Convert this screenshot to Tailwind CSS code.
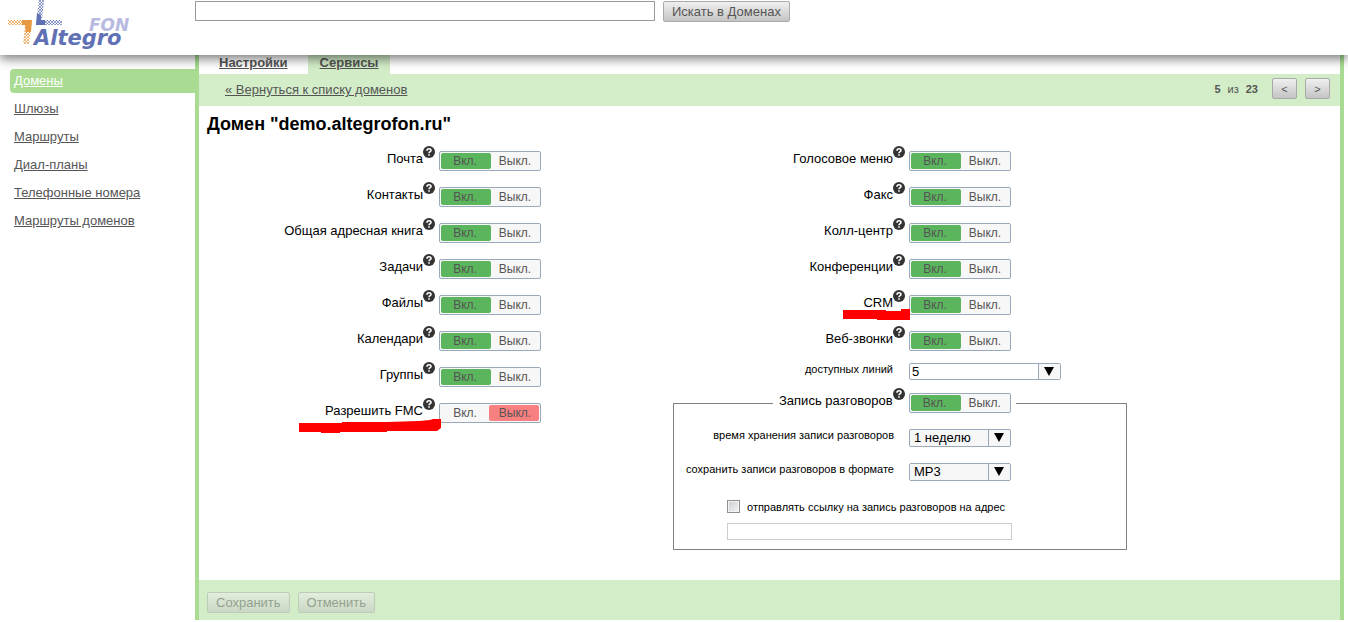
<!DOCTYPE html>
<html lang="ru">
<head>
    <meta charset="utf-8" />
    <meta name="viewport" content="width=device-width, initial-scale=1" />
    <title>Altegro FON</title>
    <script src="https://cdn.jsdelivr.net/npm/@tailwindcss/browser@4"></script>
</head>
<body class="bg-white font-['Liberation_Sans',Arial,sans-serif] text-[13px] leading-4 text-black">

    <!-- Шапка -->
    <header class="relative z-10 flex items-start h-[55px] bg-white shadow-[0_4px_10px_rgba(0,0,0,0.5)]">
        <a href="#" class="block w-[195px] shrink-0" aria-label="Altegro FON">
            <svg class="block w-[195px] h-[52px] font-['DejaVu_Sans',Verdana,sans-serif] font-bold italic" viewBox="0 0 195 52">
                <defs>
                    <pattern id="dotsBlue" width="3" height="3" patternUnits="userSpaceOnUse">
                        <circle cx="1" cy="1" r="0.900" fill="#6070b4" />
                        <circle cx="2.500" cy="2.500" r="0.700" fill="#6070b4" />
                    </pattern>
                    <pattern id="dotsOrange" width="3" height="3" patternUnits="userSpaceOnUse">
                        <circle cx="1" cy="1" r="0.900" fill="#e89a45" />
                        <circle cx="2.500" cy="2.500" r="0.700" fill="#e89a45" />
                    </pattern>
                </defs>
                <path d="M8 20h24l-3 24h-6l2-19h-17z" fill="url(#dotsOrange)" />
                <path d="M22 20h10l-1 12h-5l-1-7h-3z" fill="#e89a45" />
                <path d="M39 0h5l-2 20h20v5h-26z" fill="url(#dotsBlue)" />
                <path d="M37 13l4 2v5h4v5h-9z" fill="#6070b4" />
                <text x="89" y="31" font-size="17" fill="#b8bae0">FON</text>
                <text x="34" y="45" font-size="21" fill="#6070b4">Altegro</text>
            </svg>
        </a>
        <form class="flex items-start gap-2 pt-px">
            <input type="text" aria-label="Поиск" class="w-[460px] h-5 px-1 border border-[#999] bg-white" />
            <button type="button" class="h-[21px] px-2 border border-[#aaa] rounded-xs bg-linear-to-b from-[#f0f0f0] to-[#c4c4c4] text-[#555]">Искать в Доменах</button>
        </form>
    </header>

    <div class="flex pr-1">
        <!-- Меню -->
        <nav class="w-[195px] shrink-0 pl-[10px] pt-[14px]">
            <ul class="flex flex-col gap-1 text-[#555] leading-6">
                <li class="pl-1 rounded-l bg-[#a9dc92] text-white"><a href="#" class="underline">Домены</a></li>
                <li class="pl-1"><a href="#" class="underline">Шлюзы</a></li>
                <li class="pl-1"><a href="#" class="underline">Маршруты</a></li>
                <li class="pl-1"><a href="#" class="underline">Диал-планы</a></li>
                <li class="pl-1"><a href="#" class="underline">Телефонные номера</a></li>
                <li class="pl-1"><a href="#" class="underline">Маршруты доменов</a></li>
            </ul>
        </nav>

        <main class="flex-1 border-x-4 border-[#a9dc92]">
            <div class="flex gap-2 pl-2 font-bold text-[#555]">
                <a href="#" class="h-[19px] px-3 underline">Настройки</a>
                <a href="#" class="h-[19px] px-3 underline bg-[#d3edc8]">Сервисы</a>
            </div>

            <div class="flex items-center justify-between h-8 pl-[26px] pr-[10px] bg-[#d3edc8] text-[#555]">
                <a href="#" class="underline">« Вернуться к списку доменов</a>
                <div class="flex items-center gap-2 pb-[3px] text-[11px]">
                    <span class="flex gap-[7px] mr-1.5"><b>5</b><span>из</span><b>23</b></span>
                    <button type="button" class="w-[25px] h-[21px] border border-[#aaa] rounded-xs bg-linear-to-b from-[#f0f0f0] to-[#c4c4c4]">&lt;</button>
                    <button type="button" class="w-[25px] h-[21px] border border-[#aaa] rounded-xs bg-linear-to-b from-[#f0f0f0] to-[#c4c4c4]">&gt;</button>
                </div>
            </div>

            <h1 class="pl-2 text-[18px] leading-[37px] font-bold">Домен "demo.altegrofon.ru"</h1>

            <div class="flex pl-1 pb-[30px]">
                <div id="leftColumn" class="w-[470px] shrink-0"></div>

                <div class="w-[454px]">
                    <div id="rightColumn"></div>

                    <div class="grid grid-cols-[232px_152px] items-center gap-1 h-6">
                        <label for="lines" class="pr-3 pb-1 text-right text-[11px]">доступных линий</label>
                        <span class="relative flex">
                            <select id="lines" class="w-full h-[17px] pl-0.5 border border-[#9aa9b9] rounded-xs bg-white appearance-none leading-[15px]">
                                <option>5</option>
                            </select>
                            <svg class="absolute right-px top-px w-[22px] h-[15px] border-l border-[#9aa9b9] bg-[#f7f7f7] pointer-events-none" viewBox="0 0 21 15"><path d="M5 3h10l-5 9z" /></svg>
                        </span>
                    </div>

                    <fieldset class="mt-[5px] border border-[#808080] pb-[9px]">
                        <legend id="recordLegend" class="ml-[99px] pl-1.5 pr-[5px]"></legend>
                        <div class="pt-[3px]">
                            <div class="grid grid-cols-[231px_102px] items-center gap-1 h-[34px]">
                                <label for="period" class="pr-[11px] pb-1.5 text-right text-[11px]">время хранения записи разговоров</label>
                                <span class="relative flex">
                                    <select id="period" class="w-full h-[18px] pl-1 border border-[#9aa9b9] rounded-xs bg-[#f7f7f7] appearance-none leading-4">
                                        <option>1 неделю</option>
                                    </select>
                                    <svg class="absolute right-px top-px w-[22px] h-4 border-l border-[#9aa9b9] pointer-events-none" viewBox="0 0 21 16"><path d="M5 3h10l-5 9z" /></svg>
                                </span>
                            </div>
                            <div class="grid grid-cols-[231px_102px] items-center gap-1 h-[34px]">
                                <label for="format" class="pr-[11px] pb-1.5 text-right text-[11px]">сохранить записи разговоров в формате</label>
                                <span class="relative flex">
                                    <select id="format" class="w-full h-[18px] pl-1 border border-[#9aa9b9] rounded-xs bg-[#f7f7f7] appearance-none leading-4">
                                        <option>MP3</option>
                                    </select>
                                    <svg class="absolute right-px top-px w-[22px] h-4 border-l border-[#9aa9b9] pointer-events-none" viewBox="0 0 21 16"><path d="M5 3h10l-5 9z" /></svg>
                                </span>
                            </div>
                            <div class="flex items-center gap-[7px] h-[34px] pl-[53px]">
                                <input id="sendLink" type="checkbox" class="appearance-none size-[13px] border border-[#8e8f8f] bg-linear-to-br from-[#c9cdd3] to-[#f6f6f6] ring-1 ring-inset ring-[#f4f4f4]" />
                                <label for="sendLink" class="pt-0.5 text-[11px]">отправлять ссылку на запись разговоров на адрес</label>
                            </div>
                            <div class="flex pl-[53px]">
                                <input type="text" aria-label="Адрес" class="w-[285px] h-[17px] px-1 border border-[#ccc] text-[11px]" />
                            </div>
                        </div>
                    </fieldset>
                </div>
            </div>

            <div class="flex items-center gap-2 h-10 pl-2 pt-[5px] bg-[#d3edc8]">
                <button type="button" disabled class="h-[21px] px-2 border border-[#aaa] rounded-xs bg-linear-to-b from-[#f0f0f0] to-[#c4c4c4] text-[#555] opacity-50">Сохранить</button>
                <button type="button" disabled class="h-[21px] px-2 border border-[#aaa] rounded-xs bg-linear-to-b from-[#f0f0f0] to-[#c4c4c4] text-[#555] opacity-50">Отменить</button>
            </div>
        </main>
    </div>

    <script>
        const leftServices = [
            { name: 'Почта', on: true },
            { name: 'Контакты', on: true },
            { name: 'Общая адресная книга', on: true },
            { name: 'Задачи', on: true },
            { name: 'Файлы', on: true },
            { name: 'Календари', on: true },
            { name: 'Группы', on: true },
            {
                name: 'Разрешить FMC', on: false,
                mark: '<svg class="absolute left-[96px] top-6 w-[142px] h-[14px]" viewBox="0 0 142 14"><path d="M0 4h43v-1h45l32-1 11-1 3-1h8v9l-4 3h-50v1h-47v1h-19v-1h-22z" fill="#f00" /></svg>'
            }
        ];

        const rightServices = [
            { name: 'Голосовое меню', on: true },
            { name: 'Факс', on: true },
            { name: 'Колл-центр', on: true },
            { name: 'Конференции', on: true },
            {
                name: 'CRM', on: true,
                mark: '<svg class="absolute left-[170px] top-[22px] w-[67px] h-[11px]" viewBox="0 0 67 11"><path d="M0 1h43v1h15v-2h9v11h-33v-1h-34z" fill="#f00" /></svg>'
            },
            { name: 'Веб-звонки', on: true }
        ];

        // Подпись с иконкой подсказки
        function label(name) {
            return `<span class="flex items-center justify-end">
                <span class="pb-1">${name}</span>
                <svg class="size-3 mb-[18px] shrink-0" viewBox="0 0 12 12">
                    <circle cx="6" cy="6" r="6" fill="#333" />
                    <path d="M4 4.700c0-2.500 4-2.500 4-.2 0 1.200-2 1.200-2 2.700" fill="none" stroke="#fff" stroke-width="1.600" />
                    <path d="M5.200 8.200h1.600v1.600h-1.600z" fill="#fff" />
                </svg>
            </span>`;
        }

        // Переключатель Вкл./Выкл.
        function toggle(name, on) {
            const onClass = on ? 'bg-[#5ab55c]' : '';
            const offClass = on ? '' : 'bg-[#f98080]';
            return `<span role="group" aria-label="${name}" class="flex w-[102px] h-5 p-px border border-[#9aa9b9] rounded-xs bg-[#f7f7f7] text-[12px] text-[#555]">
                <button type="button" aria-pressed="${on}" class="w-[50px] h-4 pr-0.5 rounded-xs ${onClass}">Вкл.</button>
                <button type="button" aria-pressed="${!on}" class="w-[50px] h-4 -ml-0.5 pl-0.5 rounded-xs ${offClass}">Выкл.</button>
            </span>`;
        }

        function row(s) {
            return `<div class="relative grid grid-cols-[232px_102px] items-center gap-1 h-9">
                ${label(s.name)}${toggle(s.name, s.on)}${s.mark || ''}
            </div>`;
        }

        document.getElementById('leftColumn').innerHTML = leftServices.map(row).join('');
        document.getElementById('rightColumn').innerHTML = rightServices.map(row).join('');
        document.getElementById('recordLegend').innerHTML =
            `<span class="flex items-center gap-1">${label('Запись разговоров')}${toggle('Запись разговоров', true)}</span>`;
    </script>

</body>
</html>
